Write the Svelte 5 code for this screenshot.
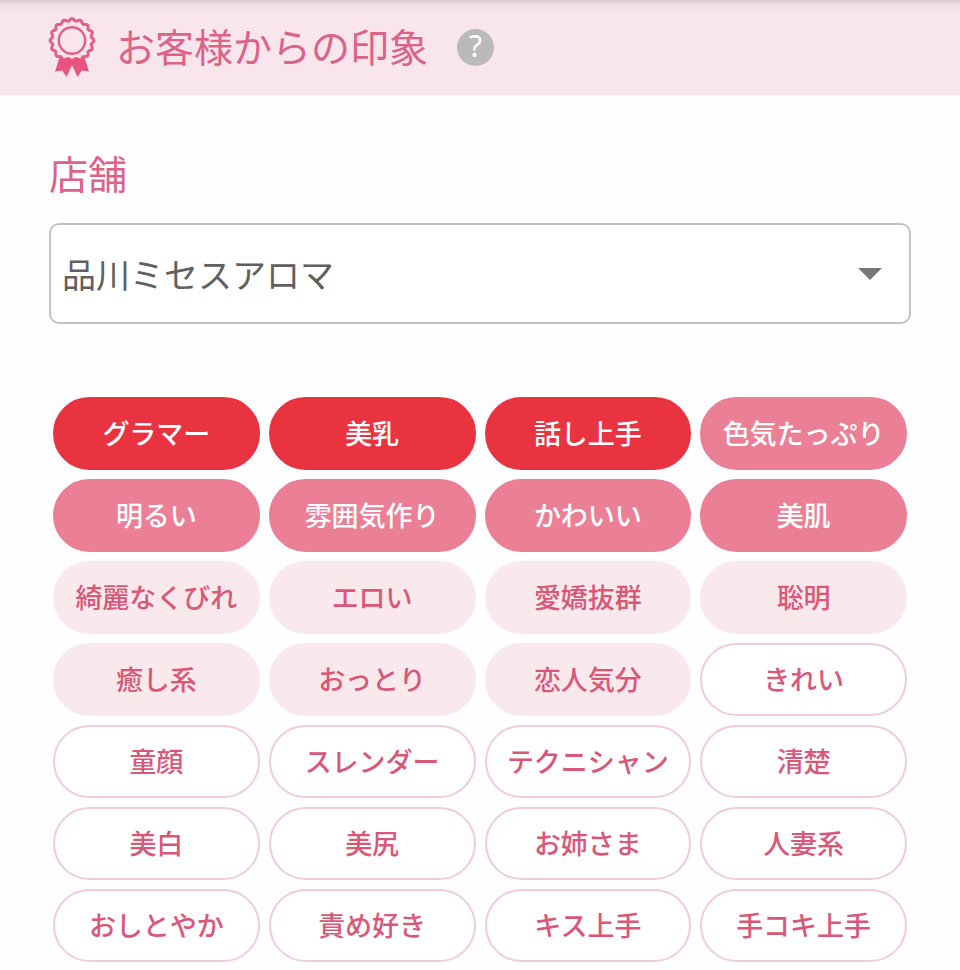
<script lang="ts">
  type Level = 'high' | 'mid' | 'low' | 'none';

  type Tag = {
    name: string;
    level: Level;
  };

  const group = (level: Level, names: string[]): Tag[] => names.map((name) => ({ name, level }));

  const shops = ['品川ミセスアロマ'];

  const tags: Tag[] = [
    ...group('high', ['グラマー', '美乳', '話し上手']),
    ...group('mid', ['色気たっぷり', '明るい', '雰囲気作り', 'かわいい', '美肌']),
    ...group('low', ['綺麗なくびれ', 'エロい', '愛嬌抜群', '聡明', '癒し系', 'おっとり', '恋人気分']),
    ...group('none', [
      'きれい', '童顔', 'スレンダー', 'テクニシャン', '清楚',
      '美白', '美尻', 'お姉さま', '人妻系',
      'おしとやか', '責め好き', 'キス上手', '手コキ上手'
    ])
  ];

  // Wavy edge of the rosette
  function wave(cx: number, cy: number, radius: number, depth: number, bumps: number) {
    const points: string[] = [];
    for (let i = 0; i < 320; i++) {
      const a = (i / 320) * Math.PI * 2;
      const r = radius + depth * Math.cos(a * bumps);
      points.push(`${(cx + r * Math.sin(a)).toFixed(2)} ${(cy - r * Math.cos(a)).toFixed(2)}`);
    }
    return `M${points.join('L')}Z`;
  }

  let shop = $state(shops[0]);
</script>

<header class="header">
  <svg class="rosette" viewBox="0 0 48 62" aria-hidden="true">
    <path class="line" d={wave(24, 23.5, 20.8, 1.1, 16)} />
    <circle class="line thin" cx="24" cy="23.5" r="13.2" />
    <path class="fill" d="M11.5 40.5Q15 42.5 18 40.5Q21.5 39 24 42.5Q26.5 39 30 40.5Q33 42.5 36.5 40.5L41 54.5L33.8 53.5L29.5 60L24 48L18.5 60L14.2 53.5L7 54.5Z" />
  </svg>
  <h1 class="title">お客様からの印象</h1>
  <button class="help" type="button" aria-label="ヘルプ">?</button>
</header>

<main class="content">
  <label class="label" for="shop">店舗</label>
  <div class="field">
    <select id="shop" class="select" bind:value={shop}>
      {#each shops as name}
        <option value={name}>{name}</option>
      {/each}
    </select>
    <svg class="arrow" viewBox="0 0 24 12" aria-hidden="true">
      <path d="M0 0h24L12 12z" />
    </svg>
  </div>

  <ul class="tags">
    {#each tags as tag}
      <li class="tag {tag.level}">{tag.name}</li>
    {/each}
  </ul>
</main>

<style>
  :global(body) {
    margin: 0;
    background: #fefefe;
    font-family: "Noto Sans CJK JP", sans-serif;
  }

  .header {
    display: flex;
    align-items: center;
    box-sizing: border-box;
    height: 95px;
    padding: 0 48px;
    background: linear-gradient(#d9c8ce, #f2dfe5 5px, #f9e6ec 12px);
  }
  .rosette { width: 48px; height: 62px; margin-right: 20px; }
  .line { fill: none; stroke: #e0608a; stroke-width: 3; }
  .thin { stroke-width: 2.4; }
  .fill { fill: #ea5280; }
  .title { margin: 0; padding-bottom: 5px; font-size: 39px; line-height: 56px; font-weight: 400; color: #dc6289; }
  .help {
    width: 37px;
    height: 37px;
    margin-left: 29px;
    padding: 0 0 3px;
    border: 0;
    border-radius: 50%;
    background: #bababa;
    color: #fff;
    font-family: "Noto Sans", sans-serif;
    font-size: 30px;
    line-height: 34px;
  }

  .content { padding: 49px 49px 8px; }
  .label { display: block; font-size: 39px; line-height: 56px; color: #dc6289; }
  .field { display: grid; align-items: center; margin-top: 23px; }
  .select {
    grid-area: 1 / 1;
    appearance: none;
    width: 100%;
    height: 101px;
    padding: 0 60px 0 11px;
    border: 2px solid #c2c2c2;
    border-radius: 10px;
    background: #fff;
    color: #606060;
    font-family: inherit;
    font-size: 34px;
  }
  .arrow {
    grid-area: 1 / 1;
    justify-self: end;
    width: 24px;
    height: 12px;
    margin-right: 29px;
    fill: #777;
    pointer-events: none;
  }

  .tags {
    display: grid;
    grid-template-columns: repeat(4, 1fr);
    gap: 9px;
    margin: 73px 0 0;
    padding: 0 4px;
    list-style: none;
  }
  .tag {
    display: flex;
    align-items: center;
    justify-content: center;
    box-sizing: border-box;
    height: 73px;
    padding-bottom: 3px;
    border: 2px solid transparent;
    border-radius: 37px;
    font-size: 27px;
    font-weight: 500;
    white-space: nowrap;
    color: #d95878;
  }
  .high { border-color: #e93340; background: #e93340; color: #fff; }
  .mid { border-color: #eb7f96; background: #eb7f96; color: #fff; }
  .low { border-color: #fae9ec; background: #fae9ec; }
  .none { border-color: #efcdd7; background: #fff; }
</style>
